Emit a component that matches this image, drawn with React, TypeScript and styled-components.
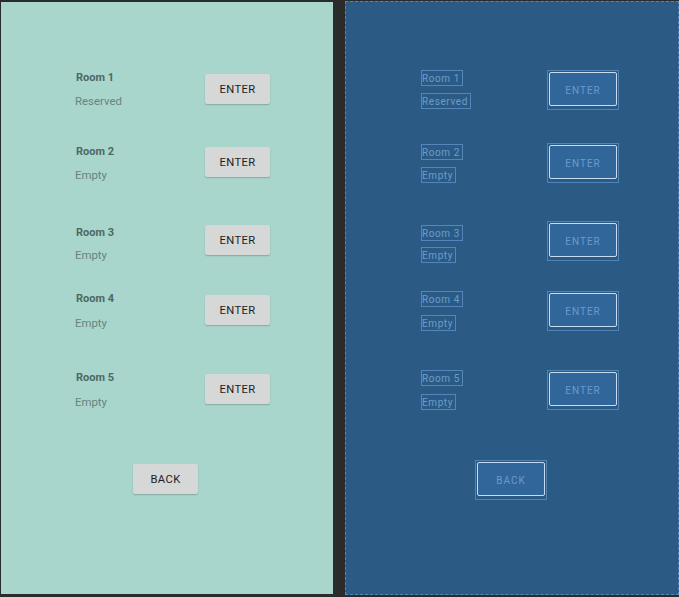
import React, { FC } from "react";
import styled, { createGlobalStyle, css } from "styled-components";

type Mode = "design" | "blueprint";

interface RoomRow {
  title: string;
  status: string;
  top: number;
  labelOffset: number;
  gap: number;
}

const rooms: RoomRow[] = [
  { title: "Room 1", status: "Reserved", top: 67, labelOffset: 0, gap: 7 },
  { title: "Room 2", status: "Empty", top: 33, labelOffset: 1, gap: 7 },
  { title: "Room 3", status: "Empty", top: 38, labelOffset: 4, gap: 6 },
  { title: "Room 4", status: "Empty", top: 28, labelOffset: 0, gap: 8 },
  { title: "Room 5", status: "Empty", top: 39, labelOffset: 0, gap: 8 },
];

const GlobalStyle = createGlobalStyle`
  html, body {
    margin: 0;
    padding: 0;
    background: #2b2b2b;
  }
  body {
    font-family: Roboto, "Liberation Sans", sans-serif;
  }
`;

const Editor = styled.div`
  display: flex;
  width: 679px;
  height: 597px;
  padding: 2px 0 3px 1px;
  gap: 12px;
  box-sizing: border-box;
  background: #2b2b2b;
  overflow: hidden;
`;

const Screen = styled.div<{ mode: Mode }>`
  display: flex;
  flex-direction: column;
  box-sizing: border-box;
  height: 592px;
  ${({ mode }) =>
    mode === "design"
      ? css`
          width: 332px;
          background: #a8d6cd;
        `
      : css`
          width: 334px;
          margin-top: -1px;
          height: 594px;
          padding-top: 1px;
          background: #2b5b84;
          border: 1px dashed #5585b6;
        `}
`;

const Row = styled.div<{ top: number }>`
  display: flex;
  align-items: flex-start;
  margin-top: ${({ top }) => top}px;
  padding-left: 75px;
`;

const LabelCol = styled.div<{ offset: number; gap: number }>`
  display: flex;
  flex-direction: column;
  align-items: flex-start;
  width: 126px;
  margin-top: ${({ offset }) => offset}px;
  gap: ${({ gap }) => gap}px;
`;

const Label = styled.span<{ mode: Mode; strong?: boolean }>`
  display: block;
  height: 16px;
  box-sizing: border-box;
  white-space: nowrap;
  ${({ mode, strong }) =>
    mode === "design"
      ? css`
          line-height: 16px;
          padding-top: 1px;
          font-size: ${strong ? "11px" : "11.4px"};
          font-weight: ${strong ? 700 : 400};
          color: ${strong ? "#4f6864" : "#66847f"};
          margin-left: ${strong ? "0" : "-1px"};
        `
      : css`
          line-height: 15px;
          font-size: 10px;
          letter-spacing: 0.6px;
          color: #6b9bcd;
          border: 1px solid #5486bb;
          padding: 0 2px 0 0;
        `}
`;

const ButtonSlot = styled.div<{ mode: Mode }>`
  display: flex;
  box-sizing: border-box;
  width: 72px;
  height: 40px;
  ${({ mode }) =>
    mode === "design"
      ? css`
          padding: 5px 4px 5px 3px;
        `
      : css`
          padding: 1px 1px 3px 1px;
          border: 1px solid #4f84b8;
        `}
`;

const ButtonFace = styled.div<{ mode: Mode }>`
  flex: 1;
  display: flex;
  align-items: center;
  justify-content: center;
  box-sizing: border-box;
  border-radius: 2px;
  ${({ mode }) =>
    mode === "design"
      ? css`
          background: #d6d7d7;
          box-shadow: 0 1px 1.5px rgba(0, 0, 0, 0.22);
          color: #1e1e1e;
          font-size: 11.2px;
          font-weight: 400;
          letter-spacing: 0.4px;
        `
      : css`
          background: #30669a;
          border: 1.5px solid #c9dcef;
          color: #6a9ace;
          font-size: 10px;
          letter-spacing: 1px;
          padding-top: 2px;
        `}
`;

const BackRow = styled.div`
  display: flex;
  margin-top: 50px;
  padding-left: 129px;
`;

const Layout: FC<{ mode: Mode }> = ({ mode }) => (
  <Screen mode={mode}>
    {rooms.map((room) => (
      <Row key={room.title} top={room.top}>
        <LabelCol offset={room.labelOffset} gap={room.gap}>
          <Label mode={mode} strong>
            {room.title}
          </Label>
          <Label mode={mode}>{room.status}</Label>
        </LabelCol>
        <ButtonSlot mode={mode}>
          <ButtonFace mode={mode}>ENTER</ButtonFace>
        </ButtonSlot>
      </Row>
    ))}
    <BackRow>
      <ButtonSlot mode={mode}>
        <ButtonFace mode={mode}>BACK</ButtonFace>
      </ButtonSlot>
    </BackRow>
  </Screen>
);

const App: FC = () => (
  <>
    <GlobalStyle />
    <Editor>
      <Layout mode="design" />
      <Layout mode="blueprint" />
    </Editor>
  </>
);

export default App;
